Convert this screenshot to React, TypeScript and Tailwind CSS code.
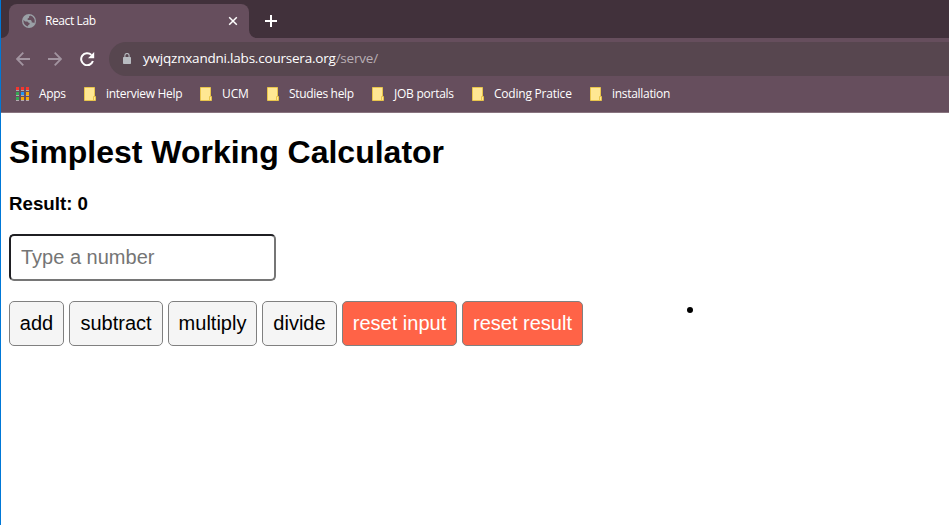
import React from "react";

const bookmarks = [
  { label: "interview Help", item: "w-[116px]", tracking: "tracking-[-0.3px]" },
  { label: "UCM", item: "w-[67px]", tracking: "tracking-[-0.1px]" },
  { label: "Studies help", item: "w-[105px]", tracking: "tracking-[-0.32px]" },
  { label: "JOB portals", item: "w-[100px]", tracking: "tracking-[-0.25px]" },
  { label: "Coding Pratice", item: "w-[118px]", tracking: "tracking-[-0.22px]" },
  { label: "installation", item: "w-[100px]", tracking: "tracking-[-0.3px]" },
];

const operations = [
  { label: "add", style: "w-[55px] bg-[#f5f5f5] text-black" },
  { label: "subtract", style: "w-[94px] bg-[#f5f5f5] text-black" },
  { label: "multiply", style: "w-[89px] bg-[#f5f5f5] text-black" },
  { label: "divide", style: "w-[75px] bg-[#f5f5f5] text-black" },
  { label: "reset input", style: "w-[115px] bg-[#ff6347] text-white" },
  { label: "reset result", style: "w-[121px] bg-[#ff6347] text-white" },
];

function Globe() {
  return (
    <svg width="14" height="14" viewBox="0 0 14 14" className="shrink-0">
      <circle cx="7" cy="7" r="7" fill="#9aa0a6" />
      <path d="M8.2 1.5 7 2.5v1.2L5.7 4.6v1.5h3l1 1v1.3h1.6l.9.9A5.6 5.6 0 0 0 8.2 1.5ZM1.5 6.1A5.6 5.6 0 0 0 6.1 12.5v-1.2l1.5-1V9L6.2 8.6 5.4 7.4H3.2Z" fill="#664e5d" />
    </svg>
  );
}

function Folder() {
  return (
    <svg width="12" height="14" viewBox="0 0 12 14" className="shrink-0">
      <path d="M.5.5h10v9h1v4H.5Z" fill="#ffe793" stroke="#e9c54b" />
      <path d="M9.5 13V9.5h1" fill="none" stroke="#e9c54b" />
    </svg>
  );
}

function Apps() {
  const colors = ["#f4362f", "#f4362f", "#f4362f", "#34a853", "#2196f3", "#f9a806", "#34a853", "#f9a806", "#f9a806"];
  return (
    <svg width="13" height="14" viewBox="0 0 13 14" className="shrink-0">
      {colors.map((c, i) => (
        <g key={i}>
          <rect x={(i % 3) * 5} y={Math.floor(i / 3) * 5} width="3" height="3" fill={c} />
          <rect x={(i % 3) * 5} y={Math.floor(i / 3) * 5 + 3} width="3" height="1" fill="#b3a9b0" />
        </g>
      ))}
    </svg>
  );
}

function TabStrip() {
  return (
    <div className="flex h-[38px] items-end bg-[#41313b]">
      <svg width="8" height="8" className="shrink-0"><path d="M8 0A8 8 0 0 1 0 8h8Z" fill="#664e5d" /></svg>
      <div className="flex h-[34px] w-[240px] items-center rounded-t-lg bg-[#664e5d] pl-[13px] pr-[11px]">
        <Globe />
        <span className="ml-[9px] flex-1 text-xs tracking-[-0.4px] whitespace-nowrap">React Lab</span>
        <svg width="10" height="10" viewBox="0 0 10 10"><path d="m1.2 1.2 7.6 7.6m0-7.6L1.2 8.8" stroke="#fff" strokeWidth="1.5" /></svg>
      </div>
      <svg width="8" height="8" className="shrink-0"><path d="M0 0A8 8 0 0 0 8 8H0Z" fill="#664e5d" /></svg>
      <svg width="12" height="12" className="mb-[11px] ml-2"><path d="M6 0v12M0 6h12" stroke="#fff" strokeWidth="2" /></svg>
    </div>
  );
}

function Toolbar() {
  return (
    <div className="flex h-[42px] items-center pl-[15px]">
      <svg width="14" height="14" viewBox="0 0 14 14" fill="none" stroke="#a294a0" strokeWidth="1.8"><path d="M14 7H1.2M7.3.7 1 7l6.3 6.3" /></svg>
      <svg width="14" height="14" viewBox="0 0 14 14" fill="none" stroke="#a294a0" strokeWidth="1.8" className="ml-[18px]"><path d="M0 7h12.8M6.7.7 13 7l-6.3 6.3" /></svg>
      <svg width="15" height="14" viewBox="0 0 15 14" className="ml-[18px]">
        <path d="M12.9 9A6 6 0 1 1 11.4 2.9" fill="none" stroke="#fff" strokeWidth="2" />
        <path d="M14.2 0v6.2H8Z" fill="#fff" />
      </svg>
      <div className="ml-[14px] flex h-[34px] flex-1 items-center rounded-l-full bg-[#57464f] pl-[14px]">
        <svg width="8" height="11" viewBox="0 0 8 11" className="mb-px shrink-0">
          <rect y="4" width="8" height="7" rx=".7" fill="#b8bcc1" />
          <path d="M1.9 4V2.6a2.1 2.1 0 0 1 4.2 0V4" fill="none" stroke="#b8bcc1" strokeWidth="1.1" />
        </svg>
        <div className="ml-[12px] pb-px text-[13.5px] tracking-[-0.21px] whitespace-nowrap">
          ywjqznxandni.labs.coursera.org<span className="text-[#b8aeb4]">/serve/</span>
        </div>
      </div>
    </div>
  );
}

function BookmarkBar() {
  return (
    <div className="flex h-[33px] items-center border-b border-[#88747f] pb-[5px] pl-[15px] text-xs whitespace-nowrap">
      <div className="flex w-[68px] shrink-0 items-center gap-[10px]">
        <Apps />
        <span className="tracking-[-0.3px]">Apps</span>
      </div>
      {bookmarks.map((b) => (
        <div key={b.label} className={`flex shrink-0 items-center gap-[10px] ${b.item}`}>
          <Folder />
          <span className={b.tracking}>{b.label}</span>
        </div>
      ))}
    </div>
  );
}

export default function App() {
  return (
    <div className="relative h-[525px] w-[949px] overflow-hidden border-l border-[#0078d7] bg-white font-['Liberation_Sans',Arial,sans-serif] text-black">
      <header className="bg-[#664e5d] font-['Open_Sans',sans-serif] text-white">
        <TabStrip />
        <Toolbar />
        <BookmarkBar />
      </header>
      <main className="px-2 pt-[21px]">
        <h1 className="text-[32px] leading-[37px] font-bold">Simplest Working Calculator</h1>
        <p className="mt-[22px] text-[18.72px] leading-[22px] font-bold">Result: 0</p>
        <input
          type="text"
          placeholder="Type a number"
          className="mt-[19px] block h-[47px] w-[267px] rounded-[5px] border-2 border-t-[#1f1f23] border-r-[#767676] border-b-[#767676] border-l-[#1f1f23] px-[10px] text-[20px] placeholder:text-[#757575]"
        />
        <div className="mt-5 flex gap-[5px]">
          {operations.map((o) => (
            <button key={o.label} className={`h-[45px] rounded-[5px] border border-[#808080] pb-[2px] text-[20px] whitespace-nowrap ${o.style}`}>
              {o.label}
            </button>
          ))}
        </div>
      </main>
      <span className="absolute top-[307px] left-[686px] size-[6px] rounded-full bg-black" />
    </div>
  );
}
